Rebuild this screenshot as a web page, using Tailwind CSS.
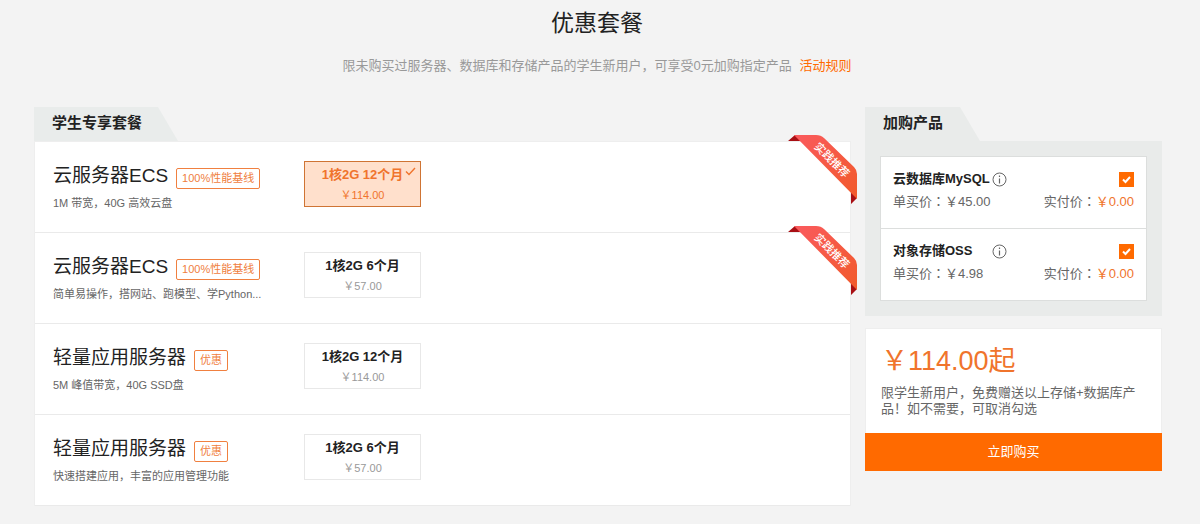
<!DOCTYPE html>
<html lang="zh-CN">
<head>
    <meta charset="UTF-8">
    <meta name="viewport" content="width=device-width, initial-scale=1.0">
    <title>优惠套餐</title>
    <script src="https://cdn.jsdelivr.net/npm/@tailwindcss/browser@4"></script>
</head>
<body class="bg-[#f3f3f3] font-['Liberation_Sans','Noto_Sans_CJK_SC',sans-serif] text-[#666] text-[13px] leading-4">
    <!-- 标题 -->
    <header class="pt-2 pl-[34px] pr-10 text-center">
        <h1 class="text-[23px] leading-[30px] text-[#222]">优惠套餐</h1>
        <p class="mt-5 text-[#999]">限未购买过服务器、数据库和存储产品的学生新用户，可享受0元加购指定产品 <a href="#" class="ml-1 text-[#ff6a00]">活动规则</a></p>
    </header>

    <main class="mt-[33px] pl-[34px] pr-[38px] pb-4 flex items-start gap-[14px]">
        <!-- 学生专享套餐 -->
        <section class="flex-1 min-w-0">
            <h2 class="w-36 h-[34px] pl-[18px] bg-[#e9eceb] [clip-path:polygon(0_0,124px_0,100%_100%,0_100%)] text-[15px] leading-8 font-bold text-[#222]">学生专享套餐</h2>
            <ul class="border-x border-t border-[#eee] bg-white">
                <li class="relative flex h-[91px] border-b border-[#eaeaea] pl-[18px] pt-[19px]">
                    <div class="w-[251px]">
                        <div class="flex items-center gap-2 h-[30px]">
                            <h3 class="text-[19px] text-[#222]">云服务器ECS</h3>
                            <span class="mt-1 px-[5px] border border-[#f08040] rounded-xs text-[11px] leading-[19px] text-[#f08040]">100%性能基线</span>
                        </div>
                        <p class="mt-1 text-[11px]">1M 带宽，40G 高效云盘</p>
                    </div>
                    <button type="button" class="relative w-[117px] h-[46px] border border-[#cf7434] bg-[#ffe0cc] text-center text-[#f0742c]">
                        <span class="block text-[13px] leading-5 font-bold">1核2G 12个月</span>
                        <span class="block mt-0.5 text-[11px] leading-4">￥114.00</span>
                        <svg class="absolute right-1 top-1 w-[11px] h-[11px]" viewBox="0 0 11 11" fill="none" stroke="#f0742c" stroke-width="1.4"><path d="M1 5.5 4 8.5 10 2"/></svg>
                    </button>
                    <div class="absolute -top-[7px] -right-[7px] w-[70px] h-[70px]">
                        <svg class="w-full h-full" viewBox="0 0 70 70">
                            <defs>
                                <linearGradient id="ribbon" x1="0" y1="0" x2="1" y2="1"><stop offset="0" stop-color="#fa5a5e"/><stop offset="1" stop-color="#f15a2a"/></linearGradient>
                            </defs>
                            <path d="M8 0 1 6H14Z M64 55V69L70 63V57Z" fill="#a80f14"/>
                            <path d="M7 0H29Q34 0 37 3L67 32Q70 35 70 39V64Z" fill="url(#ribbon)"/>
                        </svg>
                        <span class="absolute left-[21px] top-[17px] w-12 rotate-45 text-center text-[11px] leading-4 font-medium text-white">实践推荐</span>
                    </div>
                </li>
                <li class="relative flex h-[91px] border-b border-[#eaeaea] pl-[18px] pt-[19px]">
                    <div class="w-[251px]">
                        <div class="flex items-center gap-2 h-[30px]">
                            <h3 class="text-[19px] text-[#222]">云服务器ECS</h3>
                            <span class="mt-1 px-[5px] border border-[#f08040] rounded-xs text-[11px] leading-[19px] text-[#f08040]">100%性能基线</span>
                        </div>
                        <p class="mt-1 text-[11px]">简单易操作，搭网站、跑模型、学Python...</p>
                    </div>
                    <button type="button" class="w-[117px] h-[46px] border border-[#e8e8e8] bg-white text-center">
                        <span class="block text-[13px] leading-5 font-bold text-[#222]">1核2G 6个月</span>
                        <span class="block mt-0.5 text-[11px] leading-4 text-[#999]">￥57.00</span>
                    </button>
                    <div class="absolute -top-[7px] -right-[7px] w-[70px] h-[70px]">
                        <svg class="w-full h-full" viewBox="0 0 70 70">
                            <path d="M8 0 1 6H14Z M64 55V69L70 63V57Z" fill="#a80f14"/>
                            <path d="M7 0H29Q34 0 37 3L67 32Q70 35 70 39V64Z" fill="url(#ribbon)"/>
                        </svg>
                        <span class="absolute left-[21px] top-[17px] w-12 rotate-45 text-center text-[11px] leading-4 font-medium text-white">实践推荐</span>
                    </div>
                </li>
                <li class="flex h-[91px] border-b border-[#eaeaea] pl-[18px] pt-[19px]">
                    <div class="w-[251px]">
                        <div class="flex items-center gap-2 h-[30px]">
                            <h3 class="text-[19px] text-[#222]">轻量应用服务器</h3>
                            <span class="mt-1 px-[5px] border border-[#f08040] rounded-xs text-[11px] leading-[19px] text-[#f08040]">优惠</span>
                        </div>
                        <p class="mt-1 text-[11px]">5M 峰值带宽，40G SSD盘</p>
                    </div>
                    <button type="button" class="w-[117px] h-[46px] border border-[#e8e8e8] bg-white text-center">
                        <span class="block text-[13px] leading-5 font-bold text-[#222]">1核2G 12个月</span>
                        <span class="block mt-0.5 text-[11px] leading-4 text-[#999]">￥114.00</span>
                    </button>
                </li>
                <li class="flex h-[91px] border-b border-[#eaeaea] pl-[18px] pt-[19px]">
                    <div class="w-[251px]">
                        <div class="flex items-center gap-2 h-[30px]">
                            <h3 class="text-[19px] text-[#222]">轻量应用服务器</h3>
                            <span class="mt-1 px-[5px] border border-[#f08040] rounded-xs text-[11px] leading-[19px] text-[#f08040]">优惠</span>
                        </div>
                        <p class="mt-1 text-[11px]">快速搭建应用，丰富的应用管理功能</p>
                    </div>
                    <button type="button" class="w-[117px] h-[46px] border border-[#e8e8e8] bg-white text-center">
                        <span class="block text-[13px] leading-5 font-bold text-[#222]">1核2G 6个月</span>
                        <span class="block mt-0.5 text-[11px] leading-4 text-[#999]">￥57.00</span>
                    </button>
                </li>
            </ul>
        </section>

        <!-- 加购产品 -->
        <aside class="w-[297px] shrink-0">
            <h2 class="w-[115px] h-[34px] pl-[18px] bg-[#e9ebea] [clip-path:polygon(0_0,95px_0,100%_100%,0_100%)] text-[15px] leading-8 font-bold text-[#222]">加购产品</h2>
            <div class="bg-[#e9ebea] p-[15px]">
                <ul class="border border-[#dcdedd] bg-white">
                    <li class="h-[72px] border-b border-[#dcdedd] px-3 pt-[14px]">
                        <div class="flex items-center justify-between">
                            <label for="mysql" class="flex items-center font-bold text-[#222]">
                                <span class="w-[99px]">云数据库MySQL</span>
                                <svg class="w-[15px] h-[15px]" viewBox="0 0 15 15" fill="none" stroke="#666"><circle cx="7.5" cy="7.5" r="6.5"/><path d="M7.5 3.5V5M7.5 6.5V11.5" stroke-width="1.2"/></svg>
                            </label>
                            <span class="relative w-[15px] h-[15px]">
                                <input id="mysql" type="checkbox" checked class="peer block appearance-none w-[15px] h-[15px] border border-[#ff6a00] checked:bg-[#ff6a00]">
                                <svg class="absolute inset-0 hidden peer-checked:block pointer-events-none" viewBox="0 0 15 15" fill="none" stroke="#fff" stroke-width="2"><path d="M4 7.5 6.5 10 11 5"/></svg>
                            </span>
                        </div>
                        <div class="mt-1.5 flex justify-between">
                            <span>单买价<span lang="zh-TW" class="font-['Noto_Sans_CJK_TC',sans-serif]">：</span>￥45.00</span>
                            <span>实付价<span lang="zh-TW" class="font-['Noto_Sans_CJK_TC',sans-serif]">：</span><span class="text-[#f0742c]">￥0.00</span></span>
                        </div>
                    </li>
                    <li class="h-[71px] px-3 pt-[14px]">
                        <div class="flex items-center justify-between">
                            <label for="oss" class="flex items-center font-bold text-[#222]">
                                <span class="w-[99px]">对象存储OSS</span>
                                <svg class="w-[15px] h-[15px]" viewBox="0 0 15 15" fill="none" stroke="#666"><circle cx="7.5" cy="7.5" r="6.5"/><path d="M7.5 3.5V5M7.5 6.5V11.5" stroke-width="1.2"/></svg>
                            </label>
                            <span class="relative w-[15px] h-[15px]">
                                <input id="oss" type="checkbox" checked class="peer block appearance-none w-[15px] h-[15px] border border-[#ff6a00] checked:bg-[#ff6a00]">
                                <svg class="absolute inset-0 hidden peer-checked:block pointer-events-none" viewBox="0 0 15 15" fill="none" stroke="#fff" stroke-width="2"><path d="M4 7.5 6.5 10 11 5"/></svg>
                            </span>
                        </div>
                        <div class="mt-1.5 flex justify-between">
                            <span>单买价<span lang="zh-TW" class="font-['Noto_Sans_CJK_TC',sans-serif]">：</span>￥4.98</span>
                            <span>实付价<span lang="zh-TW" class="font-['Noto_Sans_CJK_TC',sans-serif]">：</span><span class="text-[#f0742c]">￥0.00</span></span>
                        </div>
                    </li>
                </ul>
            </div>

            <!-- 价格与购买 -->
            <div class="mt-3 bg-white">
                <div class="h-[105px] border border-b-0 border-[#eee] px-[15px] pt-4">
                    <p class="text-[27px] leading-8 text-[#f0742c]">￥114.00起</p>
                    <p class="mt-2">限学生新用户，免费赠送以上存储+数据库产品！如不需要，可取消勾选</p>
                </div>
                <button type="button" class="w-full h-[38px] bg-[#ff6a00] text-white">立即购买</button>
            </div>
        </aside>
    </main>
</body>
</html>
